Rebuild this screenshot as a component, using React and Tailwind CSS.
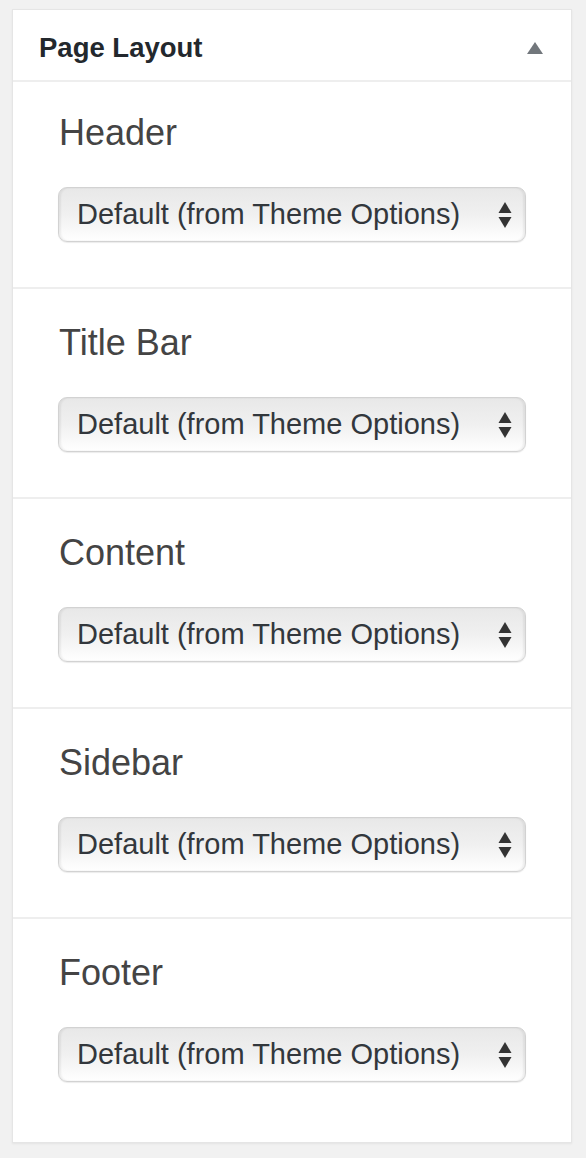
import React from 'react';

const sections = ['Header', 'Title Bar', 'Content', 'Sidebar', 'Footer'];

const SelectBox = () => (
  <div className="flex h-[55px] w-full items-center justify-between rounded-[9px] border border-[#d2d2d2] bg-gradient-to-b from-[#e8e8e8] via-[#f0f0f0] to-white pl-[18px] pr-[13px] shadow-[inset_2px_0_2px_rgba(0,0,0,0.06),inset_-2px_0_2px_rgba(0,0,0,0.06),0_1px_1px_rgba(0,0,0,0.08)]">
    <span className="text-[29px] leading-none text-[#32373c]">Default (from Theme Options)</span>
    <svg width="14" height="26" viewBox="0 0 14 26" className="shrink-0">
      <path d="M7 0 L13.5 11 L0.5 11 Z" fill="#333" />
      <path d="M0.5 15 L13.5 15 L7 26 Z" fill="#333" />
    </svg>
  </div>
);

export default function App() {
  return (
    <div className="min-h-[1158px] bg-[#f1f1f1] pt-[9px] font-['Liberation_Sans',Arial,sans-serif]">
      <div className="ml-[12px] w-[560px] border border-[#e5e5e5] bg-white shadow-[0_1px_2px_rgba(0,0,0,0.06)]">
        <div className="flex h-[72px] items-center justify-between border-b-2 border-[#eeeeee] pl-[26px] pr-[28px]">
          <h2 className="mt-[5px] text-[27.5px] font-bold text-[#23282d]">Page Layout</h2>
          <svg width="16" height="12" viewBox="0 0 16 12" className="mt-[5px]">
            <path d="M8 0 L16 12 L0 12 Z" fill="#72777c" />
          </svg>
        </div>
        {sections.map((name, i) => (
          <div
            key={name}
            className={`px-[45px] ${i > 0 ? 'border-t-2 border-[#eeeeee] pt-[34px]' : 'pt-[31px]'} ${i === sections.length - 1 ? 'pb-[60px]' : 'pb-[45px]'}`}
          >
            <div className="ml-[1px] h-[40px] text-[36px] leading-[40px] text-[#444]">{name}</div>
            <div className="mt-[34px]">
              <SelectBox />
            </div>
          </div>
        ))}
      </div>
    </div>
  );
}
